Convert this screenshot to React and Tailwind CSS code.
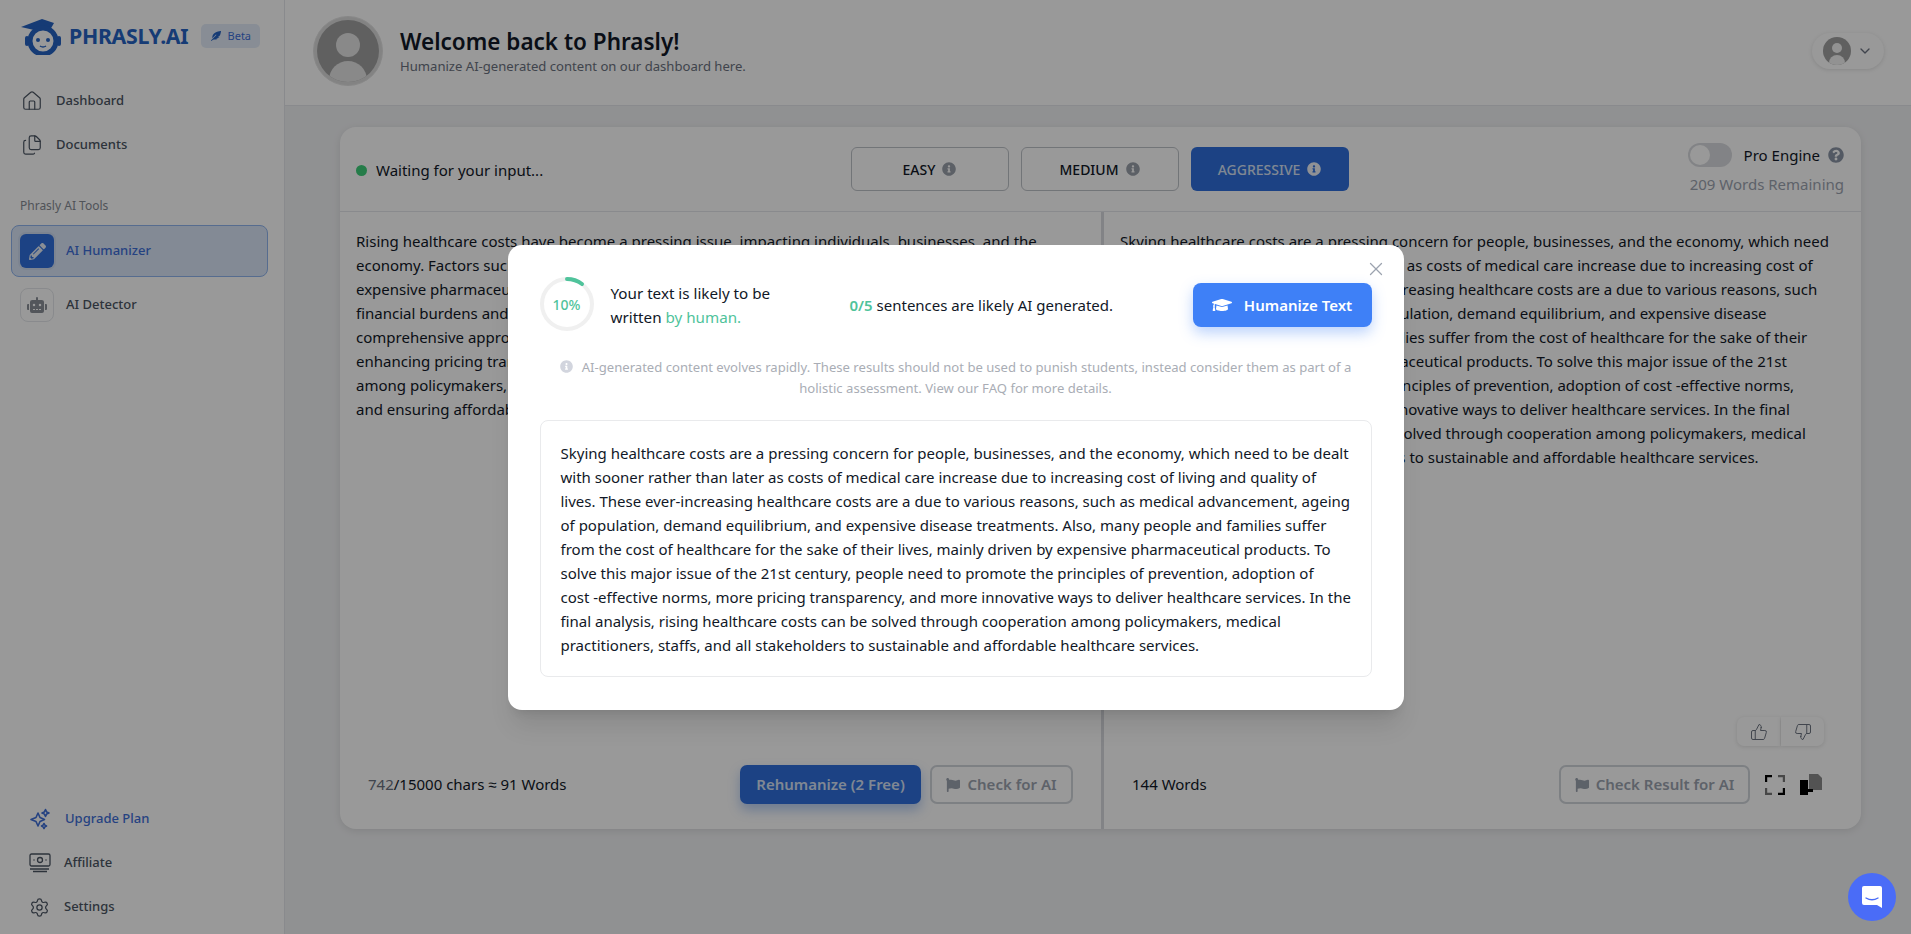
import { Home, Files, ThumbsUp, ThumbsDown, X, ChevronDown, Settings } from "lucide-react";
import { FaPencilAlt, FaRobot, FaGraduationCap, FaFlag, FaInfoCircle, FaQuestionCircle, FaFeatherAlt } from "react-icons/fa";

const resultText =
  "Skying healthcare costs are a pressing concern for people, businesses, and the economy, which need to be dealt with sooner rather than later as costs of medical care increase due to increasing cost of living and quality of lives. These ever-increasing healthcare costs are a due to various reasons, such as medical advancement, ageing of population, demand equilibrium, and expensive disease treatments. Also, many people and families suffer from the cost of healthcare for the sake of their lives, mainly driven by expensive pharmaceutical products. To solve this major issue of the 21st century, people need to promote the principles of prevention, adoption of cost -effective norms, more pricing transparency, and more innovative ways to deliver healthcare services. In the final analysis, rising healthcare costs can be solved through cooperation among policymakers, medical practitioners, staffs, and all stakeholders to sustainable and affordable healthcare services.";

const modalLines = [
  "Skying healthcare costs are a pressing concern for people, businesses, and the economy, which need to be dealt",
  "with sooner rather than later as costs of medical care increase due to increasing cost of living and quality of",
  "lives. These ever-increasing healthcare costs are a due to various reasons, such as medical advancement, ageing",
  "of population, demand equilibrium, and expensive disease treatments. Also, many people and families suffer",
  "from the cost of healthcare for the sake of their lives, mainly driven by expensive pharmaceutical products. To",
  "solve this major issue of the 21st century, people need to promote the principles of prevention, adoption of",
  "cost -effective norms, more pricing transparency, and more innovative ways to deliver healthcare services. In the",
  "final analysis, rising healthcare costs can be solved through cooperation among policymakers, medical",
  "practitioners, staffs, and all stakeholders to sustainable and affordable healthcare services.",
];

const inputLines = [
  "Rising healthcare costs have become a pressing issue, impacting individuals, businesses, and the",
  "economy. Factors such as advancements in medical technology, an aging population, and",
  "expensive pharmaceuticals contribute to this trend. Many families face significant",
  "financial burdens and difficult choices about care. Addressing this challenge requires a",
  "comprehensive approach, including preventive care, adopting cost-effective practices,",
  "enhancing pricing transparency, and investing in innovative care delivery. Collaboration",
  "among policymakers, providers, insurers, and communities is essential to lowering costs",
  "and ensuring affordable healthcare for everyone.",
];

function Logo() {
  return (
    <div className="flex items-center">
      <svg width="46" height="38" viewBox="0 0 46 38" fill="none">
        <path d="M1 10 L22 2 L34 6 L30 13 L14 13 Z" fill="#2563c4" />
        <circle cx="23" cy="24" r="13" stroke="#2563c4" strokeWidth="5" fill="none" />
        <rect x="5" y="19" width="4" height="10" rx="2" fill="#2563c4" />
        <rect x="37" y="19" width="4" height="10" rx="2" fill="#2563c4" />
        <circle cx="18" cy="23" r="2" fill="#2563c4" />
        <circle cx="28" cy="23" r="2" fill="#2563c4" />
        <path d="M20 29 Q23 31 26 29" stroke="#2563c4" strokeWidth="1.5" />
      </svg>
      <span className="ml-[3px] text-[21.3px] leading-[28px] font-bold text-[#2563c4] tracking-[-0.3px] whitespace-nowrap">PHRASLY.AI</span>
    </div>
  );
}

function Sparkle() {
  return (
    <svg width="22" height="22" viewBox="0 0 22 22" fill="none" stroke="#3f6fd8" strokeWidth="1.6" strokeLinejoin="round">
      <path d="M9 5 L11 9.5 L15.5 11.5 L11 13.5 L9 18 L7 13.5 L2 11.5 L7 9.5 Z" />
      <path d="M16.5 1.5 L17.6 3.9 L20 5 L17.6 6.1 L16.5 8.5 L15.4 6.1 L13 5 L15.4 3.9 Z" />
      <path d="M15 15.5 L15.9 17.1 L17.5 18 L15.9 18.9 L15 20.5 L14.1 18.9 L12.5 18 L14.1 17.1 Z" />
    </svg>
  );
}

function Money() {
  return (
    <svg width="22" height="20" viewBox="0 0 22 20" fill="none" stroke="#4b5563" strokeWidth="1.3">
      <rect x="1" y="1" width="20" height="12" rx="1.5" />
      <circle cx="11" cy="7" r="2.5" />
      <path d="M4.5 7h1M16.5 7h1" />
      <path d="M1 16h19M4 18.5h14" />
    </svg>
  );
}

function BigAvatar() {
  return (
    <div className="relative w-[70px] h-[70px] rounded-full border border-[#e2e2e2] bg-[#dbdbdb] p-[3px] shrink-0">
      <div className="relative w-full h-full rounded-full bg-[#a0a0a0] overflow-hidden flex flex-col items-center">
        <div className="mt-[13px] w-[24px] h-[24px] rounded-full bg-[#e4e4e4] shrink-0" />
        <div className="mt-[4px] w-[38px] h-[40px] rounded-t-[19px] bg-[#e4e4e4] shrink-0" />
      </div>
    </div>
  );
}

function SmallAvatar() {
  return (
    <div className="w-[28px] h-[28px] rounded-full bg-[#a0a0a0] overflow-hidden flex flex-col items-center">
      <div className="mt-[6px] w-[10px] h-[10px] rounded-full bg-[#f3f3f3] shrink-0" />
      <div className="mt-[2px] w-[16px] h-[14px] rounded-t-[8px] bg-[#f3f3f3] shrink-0" />
    </div>
  );
}

function Sidebar() {
  return (
    <aside className="w-[285px] h-full shrink-0 bg-white border-r border-[#e5e7eb] flex flex-col">
      <div className="flex items-center pl-[20px] pt-[17px]">
        <Logo />
        <div className="ml-[13px] w-[59px] h-[24px] rounded-[5px] bg-[#e3ecf8] flex items-center justify-center gap-[7px] text-[11px] text-[#3f6fd8]">
          <FaFeatherAlt size={10} className="text-[#2563c4]" />
          <span>Beta</span>
        </div>
      </div>

      <nav className="mt-[35px] pl-[21px] flex flex-col gap-[22px] text-[13px] font-medium text-[#4b5563]">
        <div className="flex items-center gap-[13px] h-[22px]">
          <Home size={22} strokeWidth={1.3} />
          <span>Dashboard</span>
        </div>
        <div className="flex items-center gap-[13px] h-[22px]">
          <Files size={22} strokeWidth={1.3} />
          <span>Documents</span>
        </div>
      </nav>

      <div className="mt-[41px] pl-[20px] text-[12px] text-[#868b94]">Phrasly AI Tools</div>

      <div className="mt-[10px] ml-[11px] mr-[16px] h-[52px] rounded-[8px] border border-[#8fb4ee] bg-[#dbe7f8] flex items-center pl-[8px] gap-[12px]">
        <div className="w-[34px] h-[34px] rounded-[6px] bg-[#2f6fdc] flex items-center justify-center ring-2 ring-[#cfdcf2]">
          <FaPencilAlt size={17} className="text-[#e7edf8]" />
        </div>
        <span className="text-[13px] font-medium text-[#3f6fd8]">AI Humanizer</span>
      </div>

      <div className="mt-[11px] mx-[11px] h-[34px] flex items-center pl-[9px] gap-[12px]">
        <div className="w-[34px] h-[34px] rounded-[8px] border border-[#e5e7eb] flex items-center justify-center">
          <FaRobot size={20} className="text-[#8a8f98]" />
        </div>
        <span className="text-[13px] font-medium text-[#4b5563]">AI Detector</span>
      </div>

      <div className="mt-auto pb-[16px] pl-[29px] flex flex-col gap-[22px] text-[13px] font-medium text-[#4b5563]">
        <div className="flex items-center gap-[14px] h-[22px] text-[#3f6fd8]">
          <Sparkle />
          <span>Upgrade Plan</span>
        </div>
        <div className="flex items-center gap-[13px] h-[22px]">
          <Money />
          <span>Affiliate</span>
        </div>
        <div className="flex items-center gap-[14px] h-[22px]">
          <Settings size={21} strokeWidth={1.4} />
          <span>Settings</span>
        </div>
      </div>
    </aside>
  );
}

function LevelButton({ label, active }) {
  return (
    <div
      className={
        active
          ? "w-[158px] h-[44px] rounded-[6px] bg-[#2f6fdc] text-[#d6e2f6] flex items-center justify-center gap-[7px] text-[14px] font-medium"
          : "w-[158px] h-[44px] rounded-[6px] border border-[#bfc3c9] text-[#111827] flex items-center justify-center gap-[7px] text-[14px] font-medium"
      }
    >
      <span>{label}</span>
      <FaInfoCircle size={14} className={active ? "text-[#eef2f8]" : "text-[#9aa0aa]"} />
    </div>
  );
}

function FullscreenIcon() {
  return (
    <svg width="20" height="20" viewBox="0 0 20 20" fill="none" strokeWidth="2.4">
      <path d="M1 7V1h6" stroke="#000" />
      <path d="M13 1h6v6" stroke="#777" />
      <path d="M1 13v6h6" stroke="#777" />
      <path d="M19 13v6h-6" stroke="#000" />
    </svg>
  );
}

function CopyIcon() {
  return (
    <svg width="22" height="22" viewBox="0 0 22 22">
      <path d="M0 6h8v15H0z" fill="#000" />
      <path d="M9 0h9l4 4v12H9z" fill="#8a8a8a" />
      <path d="M8 15h5v3H8z" fill="#000" />
    </svg>
  );
}

function ModalDialog() {
  return (
    <div className="relative w-[896px] h-[465px] rounded-[14px] bg-white px-[32px] pt-[33px] shadow-xl">
      <X size={22} strokeWidth={1.4} className="absolute right-[17px] top-[13px] text-[#9ca3af]" />

      <div className="flex items-center h-[54px]">
        <div className="relative w-[54px] h-[54px] shrink-0 -mt-[2px]">
          <svg width="54" height="54" viewBox="0 0 54 54" fill="none">
            <circle cx="27" cy="27" r="25" stroke="#f0f0f0" strokeWidth="4" />
            <path d="M27 2 A25 25 0 0 1 42 7" stroke="#4fc39b" strokeWidth="4" strokeLinecap="round" />
          </svg>
          <span className="absolute inset-0 flex items-center justify-center text-[14px] font-medium text-[#4fc39b]">10%</span>
        </div>
        <div className="ml-[17px] w-[239px] text-[15.2px] leading-[24px] text-[#111827]">
          Your text is likely to be
          <br />
          written <span className="text-[#4fc39b]">by human.</span>
        </div>
        <div className="text-[15px] text-[#111827]">
          <span className="font-semibold text-[#4fc39b]">0/5</span> sentences are likely AI generated.
        </div>
        <div className="ml-auto w-[179px] h-[44px] rounded-[8px] bg-[#3e80f7] shadow-[0_6px_14px_rgba(62,128,247,0.35)] text-white flex items-center justify-center gap-[12px] text-[15px] font-semibold">
          <FaGraduationCap size={20} />
          <span>Humanize Text</span>
        </div>
      </div>

      <div className="mt-[25px] text-center text-[13.1px] leading-[21px] text-[#a9adb5]">
        <FaInfoCircle size={13} className="inline mr-[9px] mb-[3px] text-[#d2d5de]" />
        AI-generated content evolves rapidly. These results should not be used to punish students, instead consider them as part of a
        <br />
        holistic assessment. View our FAQ for more details.
      </div>

      <div className="mt-[21px] h-[257px] rounded-[8px] border border-[#e9eaec] px-[20px] pt-[20px] text-[15px] leading-[24px] text-[#111827]">
        {modalLines.map((line) => (
          <div key={line} className="whitespace-nowrap">{line}</div>
        ))}
      </div>
    </div>
  );
}

export default function App() {
  return (
    <div className="relative h-[934px] w-full overflow-hidden flex bg-[#f1f2f4] text-[15px] font-['Noto_Sans',sans-serif]">
      <Sidebar />

      <div className="flex-1 min-w-0 h-full flex flex-col">
        <header className="h-[106px] shrink-0 bg-white border-b border-[#e5e7eb] flex items-center pl-[28px] pr-[27px] pb-[4px]">
          <BigAvatar />
          <div className="ml-[17px]">
            <h1 className="text-[22.5px] leading-[30px] font-semibold text-[#111827]">Welcome back to Phrasly!</h1>
            <p className="text-[13.1px] leading-[18px] text-[#6b7280]">Humanize AI-generated content on our dashboard here.</p>
          </div>
          <div className="ml-auto w-[72px] h-[36px] rounded-[18px] bg-white shadow-[0_1px_4px_rgba(0,0,0,0.12)] flex items-center justify-center gap-[6px]">
            <SmallAvatar />
            <ChevronDown size={16} className="text-[#6b7280]" />
          </div>
        </header>

        <main className="flex-1 min-h-0 pt-[21px] pl-[55px] pr-[50px]">
          <div className="h-[702px] rounded-[16px] bg-white shadow-[0_2px_8px_rgba(0,0,0,0.1)] flex flex-col">
            <div className="relative h-[85px] shrink-0 border-b border-[#e5e7eb] flex items-center justify-center gap-[12px] pl-[15px] pr-[17px]">
              <div className="absolute left-[16px] top-[32px] flex items-center gap-[9px] text-[15px] text-[#111827]">
                <span className="w-[11px] h-[11px] rounded-full bg-[#3ecf7a]" />
                Waiting for your input...
              </div>
              <LevelButton label="EASY" />
              <LevelButton label="MEDIUM" />
              <LevelButton label="AGGRESSIVE" active />
              <div className="absolute right-[17px] top-[16px] flex flex-col items-end">
                <div className="flex items-center h-[24px] text-[15px] text-[#111827]">
                  <span className="w-[44px] h-[24px] rounded-full bg-[#d9dbdf] p-[2px] mr-[12px]">
                    <span className="block w-[20px] h-[20px] rounded-full bg-white" />
                  </span>
                  Pro Engine
                  <FaQuestionCircle size={16} className="ml-[8px] text-[#8b95a5]" />
                </div>
                <div className="mt-[7px] text-[15px] leading-[20px] text-[#9ca3af]">209 Words Remaining</div>
              </div>
            </div>

            <div className="flex-1 min-h-0 flex">
              <section className="w-[764px] shrink-0 flex flex-col border-r-[3px] border-[#d9dbdf]">
                <div className="flex-1 px-[16px] pt-[17px] text-[15px] leading-[24px] text-[#111827]">
                  {inputLines.map((line) => (
                    <div key={line} className="whitespace-nowrap">{line}</div>
                  ))}
                </div>
                <div className="h-[88px] shrink-0 pt-[24px] flex items-start pl-[28px] pr-[28px]">
                  <div className="h-[39px] flex items-center text-[15px] text-[#111827]">
                    <span className="text-[#6b7280]">742</span>/15000 chars ≈ 91 Words
                  </div>
                  <div className="ml-auto w-[181px] h-[39px] rounded-[7px] bg-[#2f6fdc] shadow-[0_6px_12px_rgba(47,111,220,0.35)] text-[#d6e2f6] flex items-center justify-center text-[15px] font-semibold">
                    Rehumanize (2 Free)
                  </div>
                  <div className="ml-[9px] w-[143px] h-[39px] rounded-[7px] border-2 border-[#d1d5db] text-[#9ca3af] flex items-center justify-center gap-[7px] text-[15px] font-semibold">
                    <FaFlag size={14} />
                    Check for AI
                  </div>
                </div>
              </section>

              <section className="flex-1 min-w-0 flex flex-col">
                <div className="flex-1 min-h-0 pl-[16px] pr-[29px] pt-[17px] text-[15px] leading-[24px] text-[#111827]">{resultText}</div>
                <div className="flex justify-end pr-[37px]">
                  <div className="w-[43px] h-[29px] rounded-l-[7px] bg-white shadow-[0_1px_4px_rgba(0,0,0,0.12)] flex items-center justify-center text-[#6b7280]">
                    <ThumbsUp size={18} strokeWidth={1.3} />
                  </div>
                  <div className="ml-[1px] w-[43px] h-[29px] rounded-r-[7px] bg-white shadow-[0_1px_4px_rgba(0,0,0,0.12)] flex items-center justify-center text-[#6b7280]">
                    <ThumbsDown size={18} strokeWidth={1.3} />
                  </div>
                </div>
                <div className="h-[83px] shrink-0 pt-[19px] flex items-start pl-[28px] pr-[39px]">
                  <div className="h-[39px] flex items-center text-[15px] text-[#111827]">144 Words</div>
                  <div className="ml-auto w-[191px] h-[39px] rounded-[7px] border-2 border-[#d1d5db] text-[#9ca3af] flex items-center justify-center gap-[7px] text-[15px] font-semibold">
                    <FaFlag size={14} />
                    Check Result for AI
                  </div>
                  <div className="ml-[15px] h-[39px] flex items-center">
                    <FullscreenIcon />
                  </div>
                  <div className="ml-[15px] h-[39px] flex items-center">
                    <CopyIcon />
                  </div>
                </div>
              </section>
            </div>
          </div>
        </main>
      </div>

      {/* dim layer and dialog */}
      <div className="absolute inset-0 bg-black/40 flex justify-center items-start pt-[245px]">
        <ModalDialog />
      </div>

      <div className="absolute right-[15px] bottom-[13px] w-[48px] h-[48px] rounded-full bg-[#4a6cf7] flex items-center justify-center">
        <svg width="22" height="24" viewBox="0 0 22 24">
          <path d="M3 1h16a2 2 0 0 1 2 2v20l-5-3H3a2 2 0 0 1-2-2V3a2 2 0 0 1 2-2z" fill="#fff" />
          <path d="M5 13q6 3.5 12 0" stroke="#4a6cf7" strokeWidth="1.4" fill="none" strokeLinecap="round" />
        </svg>
      </div>
    </div>
  );
}
